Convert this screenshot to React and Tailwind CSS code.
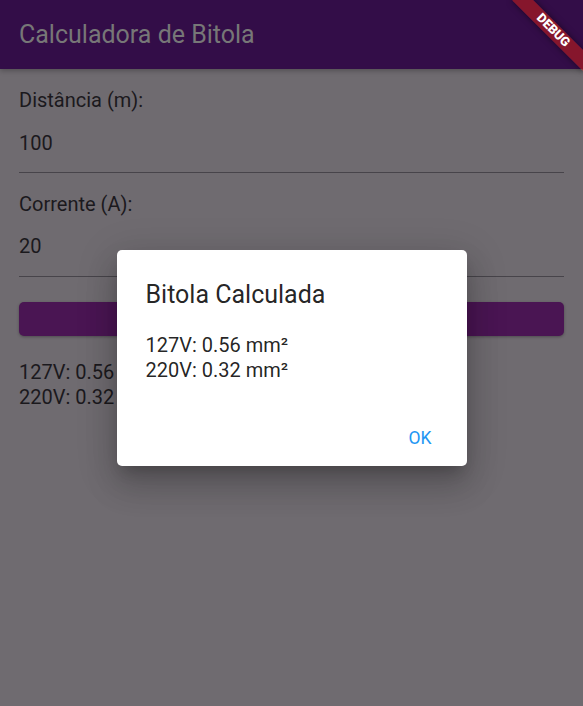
import React from "react";

export default function App() {
  return (
    <div className="relative h-[706px] w-full overflow-hidden bg-[#6f6b70] font-[Roboto,sans-serif]">
      {/* App bar */}
      <header className="flex h-[69px] items-center bg-[#330d48] px-[19px] shadow-[0_2px_5px_rgba(0,0,0,0.25)]">
        <h1 className="text-[25px] leading-[30px] font-normal text-[#777777]">Calculadora de Bitola</h1>
      </header>

      {/* Body */}
      <main className="flex flex-col px-[19px] pt-[19px] text-[20px] leading-[24.5px] text-[#1b191d]">
        <div>Distância (m):</div>
        <div className="border-b border-[#47444a] pt-[18px] pb-[17px]">100</div>
        <div className="mt-[19px]">Corrente (A):</div>
        <div className="border-b border-[#47444a] pt-[17.5px] pb-[17px]">20</div>
        <button className="mt-[25px] flex h-[34px] items-center justify-center rounded-[5px] bg-[#4a1553] text-[17.5px] font-medium text-[#757575] shadow-[0_1px_3px_rgba(0,0,0,0.3)]">
          Calcular
        </button>
        <div className="mt-[24.5px]">
          <div>127V: 0.56 mm²</div>
          <div>220V: 0.32 mm²</div>
        </div>
      </main>

      {/* Dialog */}
      <div className="absolute inset-0 flex items-start justify-center pt-[250px]">
        <div className="flex h-[216px] w-[350px] flex-col rounded-[5px] bg-white pl-[29px] pr-[10px] pt-[30px] pb-[10px] text-[rgba(0,0,0,0.87)] shadow-[0_10px_14px_-6px_rgba(0,0,0,0.2),0_20px_32px_2px_rgba(0,0,0,0.14),0_8px_38px_6px_rgba(0,0,0,0.12)]">
          <h2 className="text-[25px] leading-[30.4px] font-normal">Bitola Calculada</h2>
          <div className="mt-[23px] text-[20px] leading-[24.5px]">
            <div>127V: 0.56 mm²</div>
            <div>220V: 0.32 mm²</div>
          </div>
          <div className="mt-auto flex justify-end">
            <button className="flex h-[36px] items-center justify-center pr-[25px] text-[17.5px] font-normal text-[#2196f3]">
              OK
            </button>
          </div>
        </div>
      </div>

      {/* Debug banner */}
      <div className="absolute left-[503px] top-[22.5px] flex h-[15px] w-[100px] rotate-45 items-center justify-center bg-[#b71c1c]/[0.63] shadow-[0_0_6px_rgba(0,0,0,0.5)]">
        <span className="text-[12.75px] leading-none font-black text-white">DEBUG</span>
      </div>
    </div>
  );
}
